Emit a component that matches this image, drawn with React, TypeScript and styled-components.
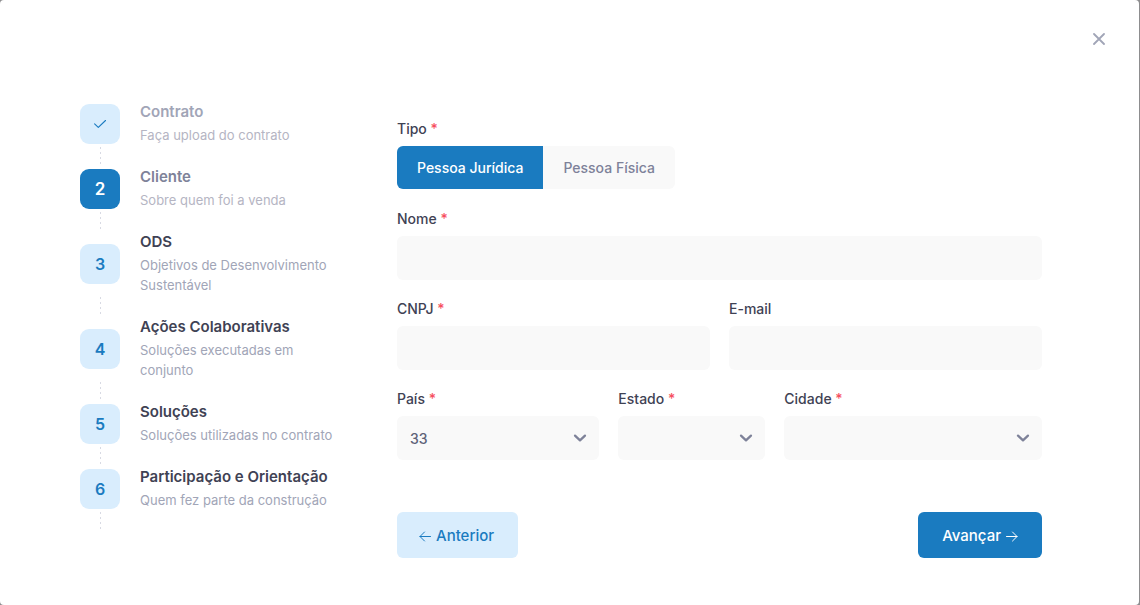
import React, { useState } from "react";
import styled, { createGlobalStyle } from "styled-components";

const GlobalStyle = createGlobalStyle`
  *, *::before, *::after { box-sizing: border-box; }
  body {
    margin: 0;
    background: #8d8d8f;
    font-family: Inter, "Liberation Sans", sans-serif;
    font-size: 14px;
    color: #3f4254;
  }
  button, input, select { font-family: inherit; }
`;

const Dialog = styled.main`
  display: flex;
  flex-direction: column;
  min-height: 100vh;
  margin-right: 1px;
  background: #fff;
  border-radius: 4px;
`;

const DialogHeader = styled.header`
  display: flex;
  justify-content: flex-end;
  padding: 24px 25px 0 0;
`;

const CloseButton = styled.button`
  display: grid;
  place-items: center;
  width: 30px;
  height: 30px;
  padding: 0;
  border: 0;
  background: none;
  color: #a1a5b7;
  cursor: pointer;
`;

const DialogBody = styled.div`
  display: flex;
  align-items: flex-start;
  padding: 49px 97px 47px 80px;
`;

const Steps = styled.ol`
  flex: 0 0 317px;
  margin: 0;
  padding: 0;
  list-style: none;
`;

const Step = styled.li`
  display: flex;
  flex-direction: column;
`;

const StepRow = styled.div`
  display: flex;
  align-items: center;
  gap: 20px;
`;

type StepState = "done" | "current" | "pending";

const StepIcon = styled.span<{ $state: StepState }>`
  display: grid;
  place-items: center;
  flex: 0 0 40px;
  height: 40px;
  border-radius: 9px;
  background: ${(p) => (p.$state === "current" ? "#1a7bc0" : "#d9edfd")};
  color: ${(p) => (p.$state === "current" ? "#fff" : "#1a7bc0")};
  font-size: ${(p) => (p.$state === "current" ? "17px" : "16px")};
  font-weight: 600;
`;

const StepLabel = styled.div`
  max-width: 196px;
`;

const titleColors: Record<StepState, string> = {
  done: "#a1a5b7",
  current: "#7e8299",
  pending: "#3f4254",
};

const StepTitle = styled.h3<{ $state: StepState }>`
  margin: 0 0 4px;
  font-size: 15px;
  line-height: 18px;
  font-weight: 600;
  color: ${(p) => titleColors[p.$state]};
`;

const StepText = styled.p<{ $state: StepState }>`
  margin: 0;
  font-size: 13px;
  line-height: 20px;
  color: ${(p) => (p.$state === "pending" ? "#a1a5b7" : "#b5b5c3")};
`;

const StepLine = styled.span`
  width: 1px;
  height: 20px;
  margin: 2px 0 1px 20px;
  background: repeating-linear-gradient(#d8dae3 0 2px, transparent 2px 5px);
`;

const Form = styled.form`
  flex: 1;
  min-width: 0;
  padding-top: 16px;
`;

const Fields = styled.div`
  display: grid;
  grid-template-columns: repeat(12, minmax(0, 1fr));
  grid-auto-rows: minmax(71px, auto);
  gap: 19px;
`;

const Field = styled.div<{ $span: number }>`
  grid-column: span ${(p) => p.$span};
  display: flex;
  flex-direction: column;
  align-items: stretch;
  gap: 7px;
`;

const Label = styled.label`
  font-size: 14px;
  line-height: 20px;
  font-weight: 500;
  color: #3f4254;
`;

const Asterisk = styled.span`
  color: #f64e60;
`;

const TextInput = styled.input`
  width: 100%;
  height: 44px;
  padding: 0 13px;
  border: 0;
  border-radius: 6px;
  background: #f9f9f9;
  color: #5e6278;
  font-size: 14px;
  font-weight: 500;
`;

const SelectBox = styled.div`
  display: grid;
  align-items: center;
  > * { grid-area: 1 / 1; }
`;

const Select = styled.select`
  appearance: none;
  width: 100%;
  height: 44px;
  padding: 0 40px 0 13px;
  border: 0;
  border-radius: 6px;
  background: #f9f9f9;
  color: #5e6278;
  font-size: 14px;
  font-weight: 500;
`;

const Chevron = styled.svg`
  justify-self: end;
  margin-right: 12px;
  pointer-events: none;
`;

const Segments = styled.div`
  display: flex;
  align-self: flex-start;
  border-radius: 6px;
  overflow: hidden;
`;

const Segment = styled.button<{ $active: boolean }>`
  height: 43px;
  padding: 0 20px;
  border: 0;
  background: ${(p) => (p.$active ? "#1a7bc0" : "#f9f9f9")};
  color: ${(p) => (p.$active ? "#fff" : "#7e8299")};
  font-size: 14px;
  font-weight: 500;
  cursor: pointer;
`;

const Actions = styled.div`
  display: flex;
  justify-content: space-between;
  padding-top: 52px;
`;

const ActionButton = styled.button<{ $primary?: boolean }>`
  display: flex;
  align-items: center;
  gap: 5px;
  height: 46px;
  padding: 0 24px 0 ${(p) => (p.$primary ? "24px" : "22px")};
  border: 0;
  border-radius: 6px;
  background: ${(p) => (p.$primary ? "#1a7bc0" : "#d9edfd")};
  color: ${(p) => (p.$primary ? "#fff" : "#1a7bc0")};
  font-size: 15px;
  font-weight: 500;
  cursor: pointer;
  svg { margin-top: 3px; }
`;

const steps: { title: string; text: string; state: StepState }[] = [
  { title: "Contrato", text: "Faça upload do contrato", state: "done" },
  { title: "Cliente", text: "Sobre quem foi a venda", state: "current" },
  { title: "ODS", text: "Objetivos de Desenvolvimento Sustentável", state: "pending" },
  { title: "Ações Colaborativas", text: "Soluções executadas em conjunto", state: "pending" },
  { title: "Soluções", text: "Soluções utilizadas no contrato", state: "pending" },
  { title: "Participação e Orientação", text: "Quem fez parte da construção", state: "pending" },
];

const clientTypes = ["Pessoa Jurídica", "Pessoa Física"];

function LineIcon(props: { d: string; width: number; height: number; stroke?: number }) {
  return (
    <svg
      width={props.width}
      height={props.height}
      viewBox={`0 0 ${props.width} ${props.height}`}
      fill="none"
      stroke="currentColor"
      strokeWidth={props.stroke ?? 1}
      strokeLinecap="round"
      aria-hidden="true"
    >
      <path d={props.d} />
    </svg>
  );
}

function Required() {
  return <Asterisk aria-hidden="true"> *</Asterisk>;
}

function TextField(props: { id: string; label: string; span: number; required?: boolean }) {
  return (
    <Field $span={props.span}>
      <Label htmlFor={props.id}>{props.label}{props.required && <Required />}</Label>
      <TextInput id={props.id} type="text" required={props.required} />
    </Field>
  );
}

function SelectField(props: { id: string; label: string; span: number; options: string[] }) {
  return (
    <Field $span={props.span}>
      <Label htmlFor={props.id}>{props.label}<Required /></Label>
      <SelectBox>
        <Select id={props.id} required>
          {props.options.map((o) => <option key={o} value={o}>{o}</option>)}
        </Select>
        <Chevron width="14" height="14" viewBox="0 0 16 16" fill="none" stroke="#7e8299" strokeWidth="2.6" strokeLinecap="round" strokeLinejoin="round" aria-hidden="true">
          <path d="m2.3 5.3 5.7 5.4 5.7-5.4" />
        </Chevron>
      </SelectBox>
    </Field>
  );
}

export default function App() {
  const [type, setType] = useState(clientTypes[0]);
  return (
    <>
      <GlobalStyle />
      <Dialog>
        <DialogHeader>
          <CloseButton type="button" aria-label="Fechar">
            <LineIcon width={12} height={12} stroke={1.8} d="M1 1l10 10M11 1L1 11" />
          </CloseButton>
        </DialogHeader>
        <DialogBody>
          <Steps>
            {steps.map((s, i) => (
              <Step key={s.title} aria-current={s.state === "current" ? "step" : undefined}>
                <StepRow>
                  <StepIcon $state={s.state}>
                    {s.state === "done" ? <LineIcon width={12} height={8} stroke={1.1} d="M.6 3.8L4.3 7.4L11.5.5" /> : i + 1}
                  </StepIcon>
                  <StepLabel>
                    <StepTitle $state={s.state}>{s.title}</StepTitle>
                    <StepText $state={s.state}>{s.text}</StepText>
                  </StepLabel>
                </StepRow>
                <StepLine />
              </Step>
            ))}
          </Steps>
          <Form onSubmit={(e) => e.preventDefault()}>
            <Fields>
              <Field $span={12} role="group" aria-labelledby="tipo">
                <Label as="span" id="tipo">Tipo<Required /></Label>
                <Segments>
                  {clientTypes.map((t) => (
                    <Segment key={t} type="button" $active={t === type} aria-pressed={t === type} onClick={() => setType(t)}>
                      {t}
                    </Segment>
                  ))}
                </Segments>
              </Field>
              <TextField id="nome" label="Nome" span={12} required />
              <TextField id="cnpj" label="CNPJ" span={6} required />
              <TextField id="email" label="E-mail" span={6} />
              <SelectField id="pais" label="País" span={4} options={["33"]} />
              <SelectField id="estado" label="Estado" span={3} options={[""]} />
              <SelectField id="cidade" label="Cidade" span={5} options={[""]} />
            </Fields>
            <Actions>
              <ActionButton type="button">
                <LineIcon width={12} height={11} d="M11.5 5.5H1M5.5 1L1 5.5L5.5 10" />
                Anterior
              </ActionButton>
              <ActionButton type="submit" $primary>
                Avançar
                <LineIcon width={12} height={11} d="M.5 5.5H11M6.5 1L11 5.5L6.5 10" />
              </ActionButton>
            </Actions>
          </Form>
        </DialogBody>
      </Dialog>
    </>
  );
}
